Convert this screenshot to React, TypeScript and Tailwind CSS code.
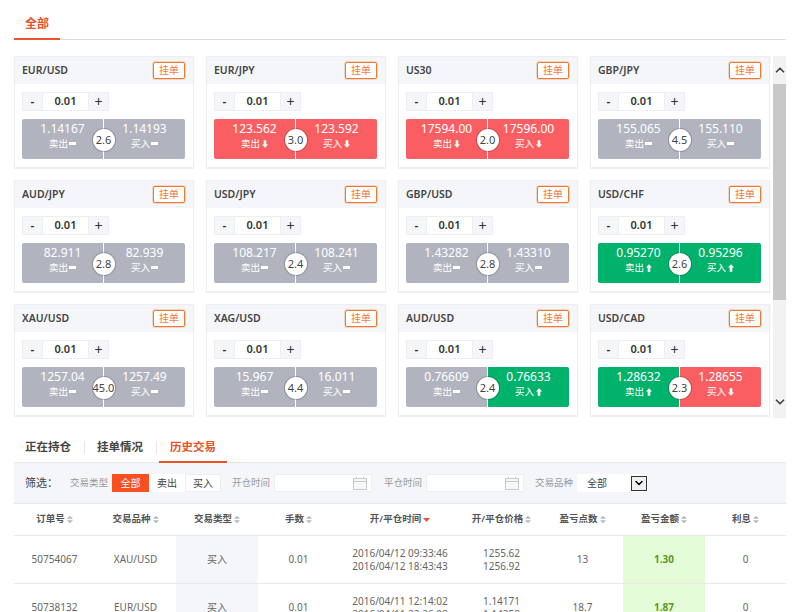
import React from "react";
import { ChevronDown, ChevronUp } from "lucide-react";

type Trend = "flat" | "down" | "up";

const quotes: { name: string; sell: string; buy: string; spread: string; sellT: Trend; buyT: Trend }[] = [
  { name: "EUR/USD", sell: "1.14167", buy: "1.14193", spread: "2.6", sellT: "flat", buyT: "flat" },
  { name: "EUR/JPY", sell: "123.562", buy: "123.592", spread: "3.0", sellT: "down", buyT: "down" },
  { name: "US30", sell: "17594.00", buy: "17596.00", spread: "2.0", sellT: "down", buyT: "down" },
  { name: "GBP/JPY", sell: "155.065", buy: "155.110", spread: "4.5", sellT: "flat", buyT: "flat" },
  { name: "AUD/JPY", sell: "82.911", buy: "82.939", spread: "2.8", sellT: "flat", buyT: "flat" },
  { name: "USD/JPY", sell: "108.217", buy: "108.241", spread: "2.4", sellT: "flat", buyT: "flat" },
  { name: "GBP/USD", sell: "1.43282", buy: "1.43310", spread: "2.8", sellT: "flat", buyT: "flat" },
  { name: "USD/CHF", sell: "0.95270", buy: "0.95296", spread: "2.6", sellT: "up", buyT: "up" },
  { name: "XAU/USD", sell: "1257.04", buy: "1257.49", spread: "45.0", sellT: "flat", buyT: "flat" },
  { name: "XAG/USD", sell: "15.967", buy: "16.011", spread: "4.4", sellT: "flat", buyT: "flat" },
  { name: "AUD/USD", sell: "0.76609", buy: "0.76633", spread: "2.4", sellT: "flat", buyT: "up" },
  { name: "USD/CAD", sell: "1.28632", buy: "1.28655", spread: "2.3", sellT: "up", buyT: "down" },
];

const trendBg: Record<Trend, string> = {
  flat: "bg-[#b1b4bf]",
  down: "bg-[#f95f62]",
  up: "bg-[#00b26b]",
};

function TrendIcon({ trend }: { trend: Trend }) {
  if (trend === "flat") return <span className="ml-px inline-block h-[3px] w-[7px] bg-white" />;
  return (
    <svg width="6" height="8" viewBox="0 0 7 9" className="ml-[2px]" fill="#fff">
      {trend === "down" ? <path d="M2 0h3v5h2L3.500 9 0 5h2z" /> : <path d="M2 9h3V4h2L3.500 0 0 4h2z" />}
    </svg>
  );
}

function QuoteSide({ price, label, trend }: { price: string; label: string; trend: Trend }) {
  return (
    <div className={`flex h-full flex-1 flex-col items-center pt-[2px] text-white ${trendBg[trend]}`}>
      <div className="text-[12px] leading-[16px]">{price}</div>
      <div className="flex items-center text-[9.5px] leading-[13px]">
        {label}
        <TrendIcon trend={trend} />
      </div>
    </div>
  );
}

function QuoteCard({ q }: { q: (typeof quotes)[number] }) {
  return (
    <div className="h-[112px] border border-[#edeef2] bg-white shadow-[0_1px_1px_rgba(0,0,0,0.06)]">
      <div className="flex h-[27px] items-center justify-between bg-[#f4f6f9] pr-[8px] pl-[7px]">
        <span className="text-[10.5px] font-semibold text-[#444]">{q.name}</span>
        <span className="flex h-[17px] w-[32px] items-center justify-center rounded-[2px] border border-[#ee7a2f] bg-white text-[10px] text-[#ee7a3a] shadow-[0_0_0_1px_rgba(238,122,47,0.25)]">
          挂单
        </span>
      </div>
      <div className="mt-[8px] ml-[7px] flex h-[19px] w-[87px] border border-[#eceef1] text-[#333]">
        <span className="flex w-[19px] items-center justify-center bg-[#f4f6f9] text-[12px] font-semibold">-</span>
        <span className="flex w-[47px] items-center justify-center border-x border-[#eceef1] bg-white text-[11px] font-semibold">
          0.01
        </span>
        <span className="flex flex-1 items-center justify-center bg-[#f4f6f9] text-[14px]">+</span>
      </div>
      <div className="relative mt-[8px] mr-[8px] ml-[7px] flex h-[40px] gap-px overflow-hidden rounded-[2px] bg-white">
        <QuoteSide price={q.sell} label="卖出" trend={q.sellT} />
        <QuoteSide price={q.buy} label="买入" trend={q.buyT} />
        <span className="absolute top-[10px] left-1/2 flex h-[22px] w-[22px] -translate-x-1/2 items-center justify-center rounded-full bg-white text-[11px] text-[#444] shadow-[0_0_0_1px_rgba(0,0,0,0.2)]">
          {q.spread}
        </span>
      </div>
    </div>
  );
}

function SortCaret({ active }: { active?: boolean }) {
  if (active) {
    return (
      <svg width="7" height="9" viewBox="0 0 7 9" className="ml-[2px]">
        <path d="M0 3h7L3.500 7z" fill="#e8533a" />
      </svg>
    );
  }
  return (
    <svg width="6" height="9" viewBox="0 0 7 9" className="ml-[2px]" fill="#b4b8bf">
      <path d="M0 3.500h7L3.500 0zM0 5.500h7L3.500 9z" />
    </svg>
  );
}

function DateInput() {
  return (
    <div className="flex h-[18px] w-[98px] items-center justify-end border border-[#eceef1] bg-white pr-[4px]">
      <svg width="14" height="13" viewBox="0 0 14 13" fill="none" stroke="#c9c9c9">
        <rect x="0.500" y="1.500" width="13" height="11" fill="#f7f7f7" />
        <path d="M0.500 4.500h13" />
        <path d="M3.500 0v2M10.500 0v2" />
      </svg>
    </div>
  );
}

const cols = [
  { label: "订单号", w: "w-[81px]" },
  { label: "交易品种", w: "w-[81px]" },
  { label: "交易类型", w: "w-[82px]" },
  { label: "手数", w: "w-[81px]" },
  { label: "开/平仓时间", w: "w-[122px]", active: true },
  { label: "开/平仓价格", w: "w-[81px]" },
  { label: "盈亏点数", w: "w-[81px]" },
  { label: "盈亏金额", w: "w-[82px]" },
  { label: "利息", w: "w-[81px]" },
];

const rows = [
  {
    id: "50754067",
    sym: "XAU/USD",
    type: "买入",
    lots: "0.01",
    times: ["2016/04/12 09:33:46", "2016/04/12 18:43:43"],
    prices: ["1255.62", "1256.92"],
    pts: "13",
    amt: "1.30",
    fee: "0",
  },
  {
    id: "50738132",
    sym: "EUR/USD",
    type: "买入",
    lots: "0.01",
    times: ["2016/04/11 12:14:02", "2016/04/11 22:26:08"],
    prices: ["1.14171", "1.14358"],
    pts: "18.7",
    amt: "1.87",
    fee: "0",
  },
];

export default function App() {
  return (
    <div
      className="h-[612px] w-[800px] overflow-hidden bg-white px-[14px]"
      style={{ fontFamily: '"Noto Sans", "Noto Sans CJK SC", sans-serif' }}
    >
      {/* top tab */}
      <div className="h-[40px] border-b border-[#d9dbde] pt-[14px]">
        <div className="h-[26px] w-[46px] border-b-2 border-[#e8532a] text-center text-[12px] leading-[19px] font-semibold text-[#e8532a]">
          全部
        </div>
      </div>

      {/* quote grid */}
      <div className="mt-[16px] flex h-[362px]">
        <div className="grid w-[756px] grid-cols-4 content-start gap-x-[12px] gap-y-[12px]">
          {quotes.map((q) => (
            <QuoteCard key={q.name} q={q} />
          ))}
        </div>
        <div className="ml-[3px] flex w-[13px] flex-col items-center bg-[#f2f2f2]">
          <div className="flex h-[28px] items-center">
            <ChevronUp size={14} strokeWidth={3} className="text-[#444]" />
          </div>
          <div className="h-[216px] w-full bg-[#c8c8c8]" />
          <div className="flex flex-1 items-end pb-[9px]">
            <ChevronDown size={14} strokeWidth={3} className="text-[#444]" />
          </div>
        </div>
      </div>

      {/* history tabs */}
      <div className="mt-[14px] flex h-[30px] items-start text-[11.5px] font-semibold">
        <span className="w-[70px] pt-[7px] pl-[11px] leading-[16px] text-[#444]">正在持仓</span>
        <span className="mt-[9px] h-[13px] w-px bg-[#e6e7ea]" />
        <span className="w-[71px] pt-[7px] pl-[12px] leading-[16px] text-[#444]">挂单情况</span>
        <span className="mt-[9px] h-[13px] w-px bg-[#e6e7ea]" />
        <span className="ml-[2px] h-[31px] w-[68px] border-b-2 border-[#e8532a] pt-[7px] pl-[11px] leading-[16px] text-[#e8532a]">
          历史交易
        </span>
      </div>

      {/* filter bar */}
      <div className="flex h-[42px] items-center border-t border-b border-[#e6e8eb] bg-[#f4f6f9] pl-[11px] text-[9.5px] text-[#999]">
        <span className="w-[45px] text-[11px] text-[#444]">筛选：</span>
        <span>交易类型</span>
        <div className="ml-[4px] flex h-[18px] text-[10px] text-[#444]">
          <span className="flex w-[37px] items-center justify-center bg-[#f8501f] text-white">全部</span>
          <span className="flex w-[36px] items-center justify-center bg-white">卖出</span>
          <span className="flex w-[36px] items-center justify-center border border-[#eceef1] bg-white">买入</span>
        </div>
        <span className="mr-[4px] ml-[11px]">开仓时间</span>
        <DateInput />
        <span className="mr-[4px] ml-[12px]">平仓时间</span>
        <DateInput />
        <span className="mr-[4px] ml-[11px]">交易品种</span>
        <div className="flex h-[18px] w-[71px] items-center justify-between bg-white pr-[1px] pl-[10px] text-[10px] text-[#444]">
          全部
          <span className="flex h-[15px] w-[16px] items-center justify-center border border-[#333] bg-[#f0f0f0]">
            <ChevronDown size={12} strokeWidth={3} className="text-black" />
          </span>
        </div>
      </div>

      {/* table */}
      <div className="flex h-[32px] border-b border-[#e6e8eb]">
        {cols.map((c) => (
          <div
            key={c.label}
            className={`${c.w} flex items-center justify-center text-[9.5px] font-semibold text-[#555]`}
          >
            {c.label}
            <SortCaret active={c.active} />
          </div>
        ))}
      </div>
      {rows.map((r) => (
        <div key={r.id} className="flex h-[48px] border-b border-[#e6e8eb] text-[10px] text-[#666]">
          <div className="flex w-[81px] items-center justify-center">{r.id}</div>
          <div className="flex w-[81px] items-center justify-center">{r.sym}</div>
          <div className="flex w-[82px] items-center justify-center bg-[#f4f6f9]">{r.type}</div>
          <div className="flex w-[81px] items-center justify-center">{r.lots}</div>
          <div className="flex w-[122px] flex-col items-center justify-center leading-[13px]">
            {r.times.map((t) => (
              <span key={t}>{t}</span>
            ))}
          </div>
          <div className="flex w-[81px] flex-col items-center justify-center leading-[13px]">
            {r.prices.map((p) => (
              <span key={p}>{p}</span>
            ))}
          </div>
          <div className="flex w-[81px] items-center justify-center">{r.pts}</div>
          <div className="flex w-[82px] items-center justify-center bg-[#e4fbd8] font-bold text-[#5a9a1e]">
            {r.amt}
          </div>
          <div className="flex w-[81px] items-center justify-center">{r.fee}</div>
        </div>
      ))}
    </div>
  );
}
